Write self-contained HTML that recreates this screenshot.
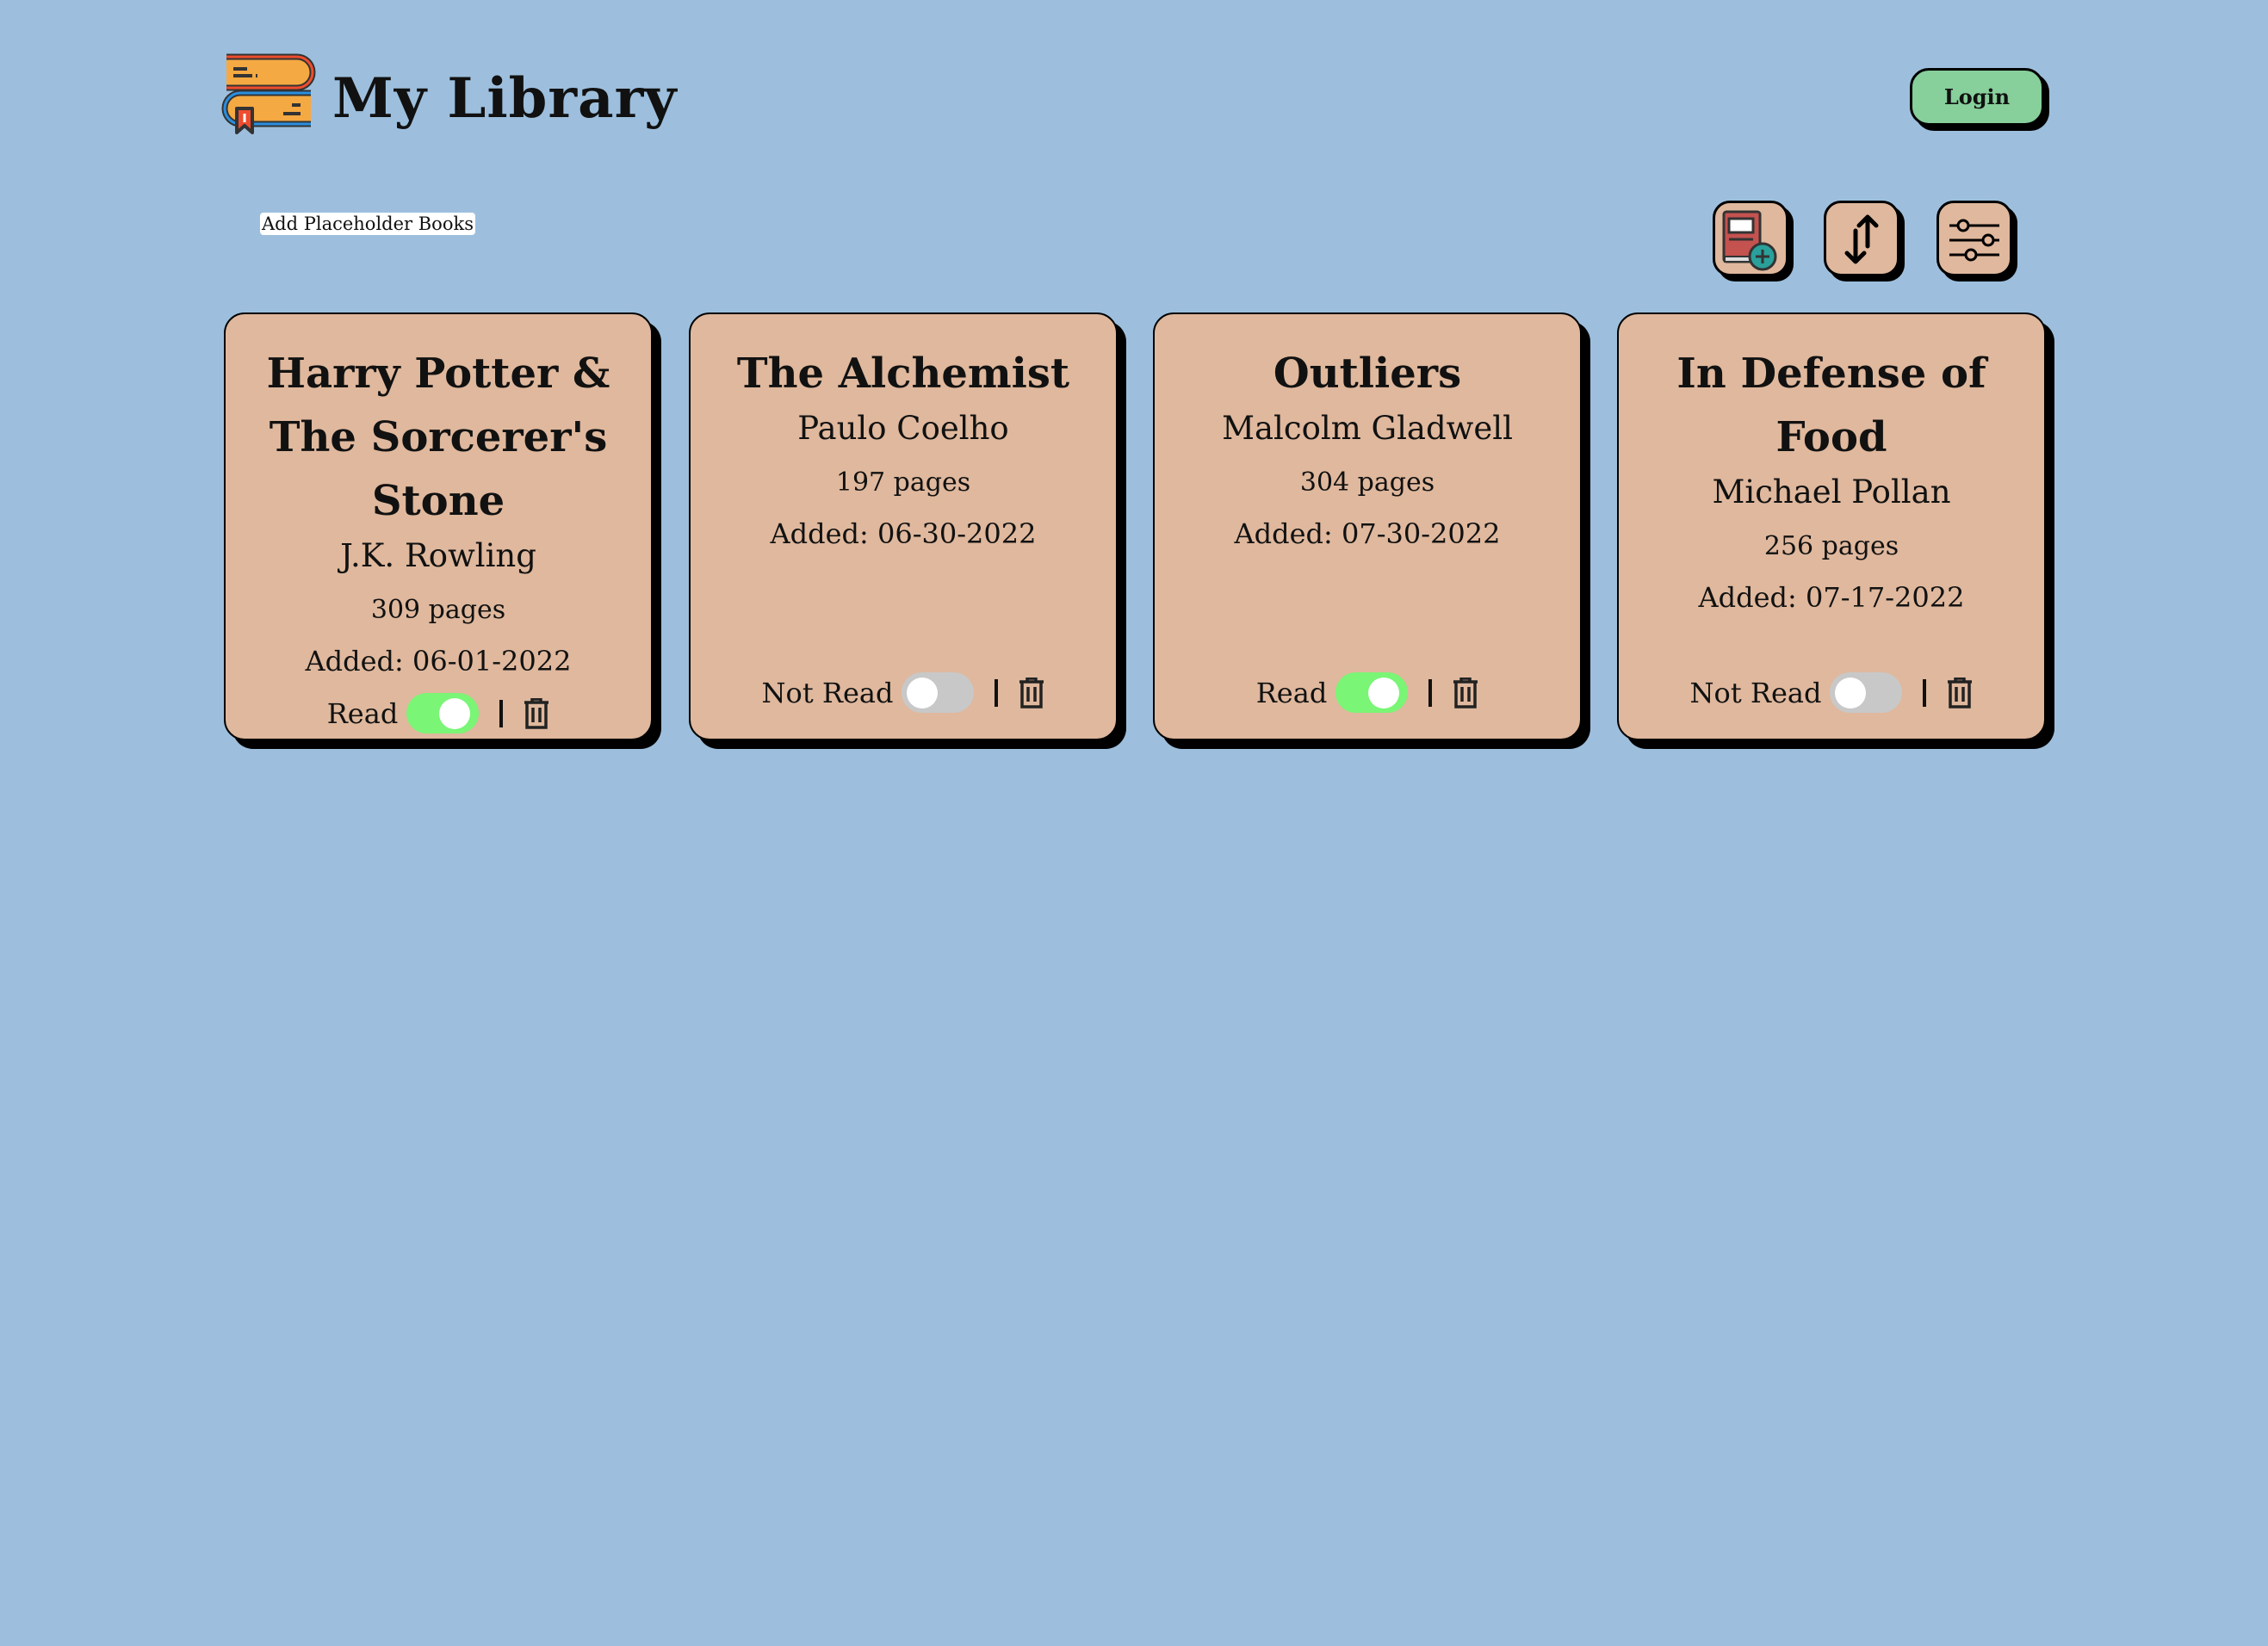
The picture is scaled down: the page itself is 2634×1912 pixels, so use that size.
<!DOCTYPE html>
<html><head><meta charset="utf-8">
<style>
*{margin:0;padding:0;box-sizing:border-box}
html,body{width:2634px;height:1912px;background:#9dbfdd;overflow:hidden;font-family:"DejaVu Serif","Liberation Serif",serif;color:#111}
.abs{position:absolute}
h1{position:absolute;left:386px;top:70px;font-size:64px;font-weight:bold;line-height:90px;letter-spacing:1px}
.login{position:absolute;left:2218px;top:79px;width:156px;height:67px;background:#87cf9b;border:3px solid #000;border-radius:22px;box-shadow:6px 6px 0 #000;font-weight:bold;font-size:24px;display:flex;align-items:center;justify-content:center}
.ph{position:absolute;left:302px;top:247px;height:26px;padding:0 2px;background:#fff;border-radius:4px;font-size:21px;line-height:26px;white-space:nowrap}
.ib{position:absolute;top:233px;width:88px;height:88px;background:#dfb89d;border:3px solid #000;border-radius:20px;box-shadow:6px 6px 0 #000}
.card{position:absolute;top:363px;width:498px;height:497px;background:#dfb89d;border:2px solid #000;border-radius:24px;box-shadow:10px 10px 0 #000;text-align:center}
.t{font-weight:bold;font-size:48px;line-height:74px;margin-top:32px;padding:0 28px}
.a{font-size:37px;line-height:46px;margin-top:4px}
.p{font-size:30px;line-height:40px;margin-top:20px}
.d{font-size:32px;line-height:40px;margin-top:19px}
.row{position:absolute;left:0;right:0;display:flex;align-items:center;justify-content:center;font-size:32px}
.tg{width:84px;height:47px;border-radius:24px;margin-left:10px;position:relative}
.tg i{position:absolute;top:6px;width:36px;height:36px;border-radius:50%;background:#fff}
.on{background:#7af575}.on i{right:10px}
.off{background:#c8c8c8}.off i{left:6px}
.bar{width:4px;height:32px;background:#111;margin:0 24px 0 24px}
</style></head><body>
<svg class="abs" style="left:257px;top:60px" width="110" height="96" viewBox="0 0 110 96">
<path d="M6 6 H88 A16 16 0 0 1 88 42 H6" fill="#f4a942" stroke="#333" stroke-width="7" stroke-linejoin="round"/>
<path d="M6 6 H88 A16 16 0 0 1 88 42 H6" fill="none" stroke="#ef4c2e" stroke-width="3"/>
<path d="M14 20 H30 M14 28 H36 M40 28 h2" stroke="#333" stroke-width="4"/>
<path d="M104 48 H22 A18 18 0 0 0 22 84 H104" fill="#f4a942" stroke="#333" stroke-width="7" stroke-linejoin="round"/>
<path d="M104 48 H22 A18 18 0 0 0 22 84 H104" fill="none" stroke="#2a8fe0" stroke-width="3"/>
<path d="M82 62 H92 M72 72 H92" stroke="#333" stroke-width="4"/>
<path d="M18 66 H36 V94 L27 86 L18 94 Z" fill="#ef4c2e" stroke="#333" stroke-width="4" stroke-linejoin="round"/>
<path d="M27 72 V82" stroke="#fff" stroke-width="3"/>
</svg>
<h1>My Library</h1>
<div class="login">Login</div>
<div class="ph">Add Placeholder Books</div>

<div class="ib" style="left:1989px"><svg width="82" height="82" viewBox="0 0 82 82">
<rect x="10" y="10" width="42" height="58" rx="3" fill="#c4524f" stroke="#333" stroke-width="3"/>
<rect x="16" y="18" width="28" height="16" fill="#fff" stroke="#333" stroke-width="3"/>
<path d="M16 42 H44" stroke="#333" stroke-width="3"/>
<rect x="11" y="62" width="40" height="6" fill="#ddd" stroke="#333" stroke-width="2"/>
<circle cx="55" cy="62" r="15" fill="#2aa09b" stroke="#333" stroke-width="3"/>
<path d="M55 54 V70 M47 62 H63" stroke="#333" stroke-width="3"/></svg></div>
<div class="ib" style="left:2118px"><svg width="82" height="82" viewBox="0 0 82 82">
<path d="M48 50 V16 M38 26 L48 16 L58 26 M34 32 V68 M24 58 L34 68 L44 58" fill="none" stroke="#000" stroke-width="5" stroke-linecap="round" stroke-linejoin="round"/></svg></div>
<div class="ib" style="left:2249px"><svg width="82" height="82" viewBox="0 0 82 82">
<path d="M12 26 H70 M12 43 H70 M12 60 H70" stroke="#000" stroke-width="3"/>
<circle cx="28" cy="26" r="6" fill="#dfb89d" stroke="#000" stroke-width="3"/>
<circle cx="57" cy="43" r="6" fill="#dfb89d" stroke="#000" stroke-width="3"/>
<circle cx="37" cy="60" r="6" fill="#dfb89d" stroke="#000" stroke-width="3"/></svg></div>

<div class="card" style="left:260px">
<div class="t">Harry Potter &amp; The Sorcerer's Stone</div>
<div class="a">J.K. Rowling</div><div class="p">309 pages</div><div class="d">Added: 06-01-2022</div>
<div class="row" style="top:440px">Read<div class="tg on"><i></i></div><div class="bar"></div><svg width="30" height="36" viewBox="0 0 30 36"><path d="M1 5 H29 M10 5 V1 H20 V5 M4 5 V34 H26 V5 M11 11 V28 M19 11 V28" fill="none" stroke="#222" stroke-width="3.5"/></svg></div>
</div>
<div class="card" style="left:800px">
<div class="t">The Alchemist</div>
<div class="a">Paulo Coelho</div><div class="p">197 pages</div><div class="d">Added: 06-30-2022</div>
<div class="row" style="top:416px">Not Read<div class="tg off"><i></i></div><div class="bar"></div><svg width="30" height="36" viewBox="0 0 30 36"><path d="M1 5 H29 M10 5 V1 H20 V5 M4 5 V34 H26 V5 M11 11 V28 M19 11 V28" fill="none" stroke="#222" stroke-width="3.5"/></svg></div>
</div>
<div class="card" style="left:1339px">
<div class="t">Outliers</div>
<div class="a">Malcolm Gladwell</div><div class="p">304 pages</div><div class="d">Added: 07-30-2022</div>
<div class="row" style="top:416px">Read<div class="tg on"><i></i></div><div class="bar"></div><svg width="30" height="36" viewBox="0 0 30 36"><path d="M1 5 H29 M10 5 V1 H20 V5 M4 5 V34 H26 V5 M11 11 V28 M19 11 V28" fill="none" stroke="#222" stroke-width="3.5"/></svg></div>
</div>
<div class="card" style="left:1878px">
<div class="t">In Defense of Food</div>
<div class="a">Michael Pollan</div><div class="p">256 pages</div><div class="d">Added: 07-17-2022</div>
<div class="row" style="top:416px">Not Read<div class="tg off"><i></i></div><div class="bar"></div><svg width="30" height="36" viewBox="0 0 30 36"><path d="M1 5 H29 M10 5 V1 H20 V5 M4 5 V34 H26 V5 M11 11 V28 M19 11 V28" fill="none" stroke="#222" stroke-width="3.5"/></svg></div>
</div>
</body></html>
